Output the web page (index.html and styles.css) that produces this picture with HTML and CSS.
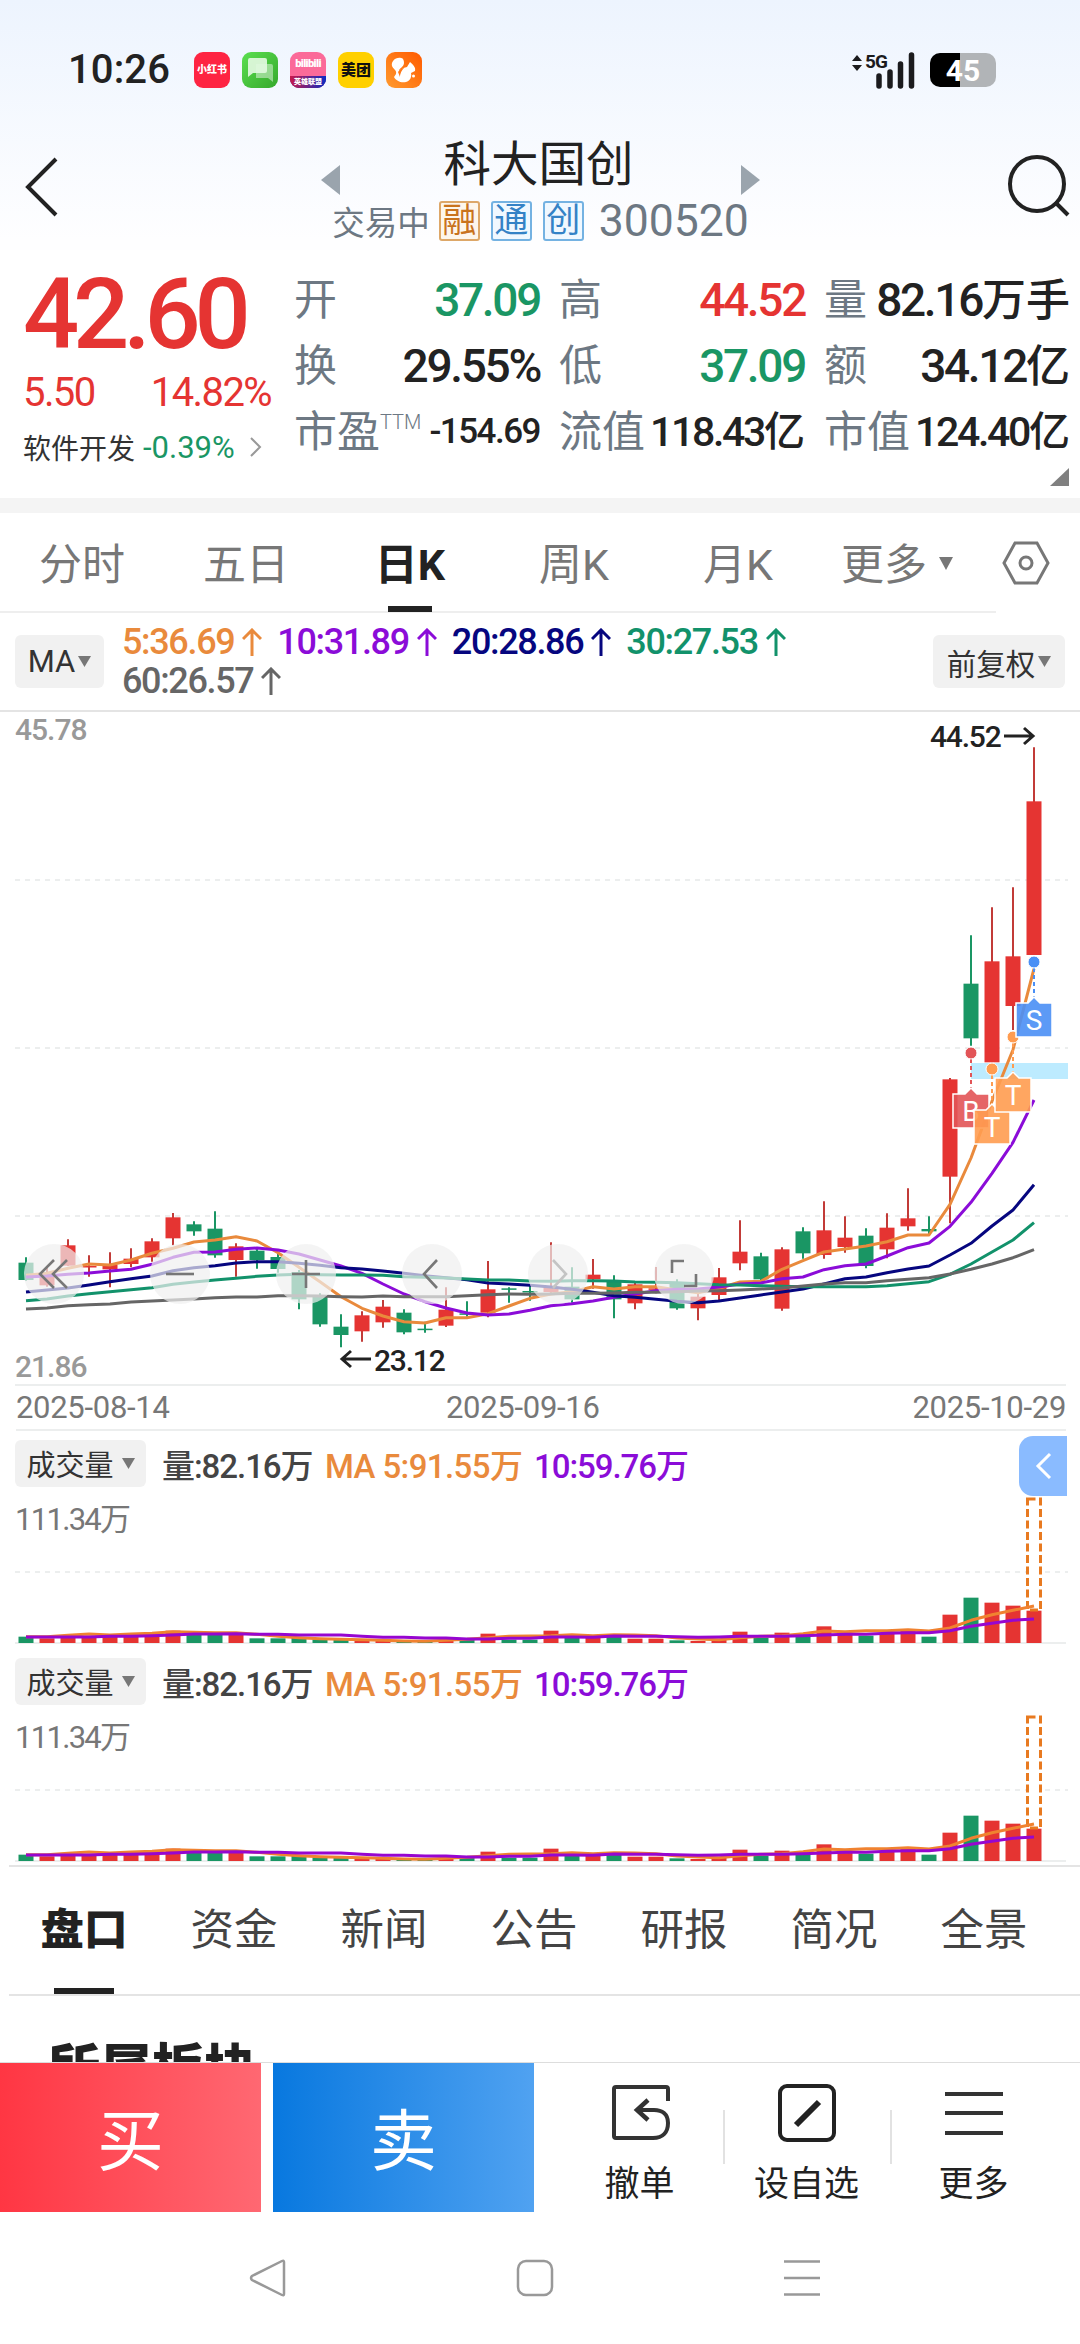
FILE: index.html
```html
<!DOCTYPE html>
<html lang="zh-CN">
<head>
	<meta charset="UTF-8">
	<title>科大国创 300520</title>
	<link rel="stylesheet" href="styles.css">
</head>
<body>
	<div class="top">
		<div class="status">
			<span class="time">10:26</span>
			<div class="apps">
				<span class="app xhs">小红书</span>
				<span class="app msg">
					<svg width="36" height="36" viewBox="0 0 36 36"><path d="M14 12h15q2 0 2 2v16l-5-4H14z" fill="#fff" opacity=".45"/><path d="M8 6h15q2 0 2 2v11q0 2-2 2H11l-5 4V8q0-2 2-2z" fill="#e2f9e0" opacity=".92"/></svg>
				</span>
				<span class="app bili"><b>bilibili</b><i>英雄联盟</i></span>
				<span class="app mt">美团</span>
				<span class="app uc">
					<svg width="36" height="36" viewBox="0 0 36 36" fill="#fff"><path d="M15 6c-6-1-10 4-9 8 1 3 5 4 4 8l-2 3c2 4 7 6 12 5 4-1 6-5 5-9l4-2c1-4-2-6-5-9l-3 5c-4 1-6 2-8 4 0-3 5-4 5-8 0-3-1-5-3-5z"/><path d="M12 20q3-4 6-4-4 4-4 9z" fill="#ff7a1a"/><circle cx="27.500" cy="24" r="1.500"/></svg>
				</span>
			</div>
			<svg class="signal" width="66" height="40" viewBox="0 0 66 40">
				<path d="M1 11l5-6 5 6zM1 15h10l-5 6z" fill="#1b1b1d"/>
				<text x="14" y="18" class="g5">5G</text>
				<path d="M28 26v10M39 22v14M49.500 14v22M60.500 5v31" stroke="#1b1b1d" stroke-width="5.500" stroke-linecap="round"/>
			</svg>
			<div class="battery">45</div>
		</div>
		<div class="head">
			<svg class="back" width="36" height="62" viewBox="0 0 36 62"><path d="M32 3L4 31l28 28" fill="none" stroke="#222" stroke-width="4"/></svg>
			<svg class="tri" width="19" height="30"><path d="M19 0v30L0 15z"/></svg>
			<div class="name">
				<h1>科大国创</h1>
				<div class="sub"><span class="state">交易中</span><em class="rong">融</em><em>通</em><em>创</em><span class="code">300520</span></div>
			</div>
			<svg class="tri" width="19" height="30"><path d="M0 0v30l19-15z"/></svg>
			<svg class="search" width="64" height="64" viewBox="0 0 64 64" fill="none" stroke="#222" stroke-width="4"><circle cx="30" cy="30" r="27"/><path d="M48 48l13 13"/></svg>
		</div>
	</div>

	<div class="quote">
		<div class="price">
			<div class="now">42.60</div>
			<div class="chg"><span>5.50</span><span>14.82%</span></div>
			<div class="sector">软件开发<span>-0.39%</span><svg width="16" height="24"><path d="M3 3l9 9-9 9" fill="none" stroke="#999" stroke-width="2"/></svg></div>
		</div>
		<div class="cells">
			<div><label>开</label><b class="green">37.09</b></div>
			<div><label>高</label><b class="red">44.52</b></div>
			<div><label>量</label><b>82.16<i>万手</i></b></div>
			<div><label>换</label><b>29.55%</b></div>
			<div><label>低</label><b class="green">37.09</b></div>
			<div><label>额</label><b>34.12<i>亿</i></b></div>
			<div><label>市盈<sup>TTM</sup></label><b class="small">-154.69</b></div>
			<div><label>流值</label><b class="mid">118.43<i>亿</i></b></div>
			<div><label>市值</label><b class="mid">124.40<i>亿</i></b></div>
		</div>
		<svg class="corner" width="19" height="18"><path d="M19 0v18H0z" fill="#808080"/></svg>
	</div>

	<div class="period">
		<span>分时</span>
		<span>五日</span>
		<span class="on">日K</span>
		<span>周K</span>
		<span>月K</span>
		<span class="more">更多<svg width="14" height="13"><path d="M0 0h14L7 13z"/></svg></span>
		<svg class="hex" width="48" height="44" viewBox="0 0 48 44" fill="none" stroke="#777" stroke-width="3"><path d="M13 2h22l11 20-11 20H13L2 22z"/><circle cx="24" cy="22" r="6"/></svg>
	</div>

	<div class="mabar">
		<div class="btn ma">MA<svg width="13" height="11"><path d="M0 0h13L6.500 11z"/></svg></div>
		<div class="malist">
			<span class="m5">5:36.69<svg width="20" height="28"><path d="M10 28V2M1 11l9-9 9 9"/></svg></span>
			<span class="m10">10:31.89<svg width="20" height="28"><path d="M10 28V2M1 11l9-9 9 9"/></svg></span>
			<span class="m20">20:28.86<svg width="20" height="28"><path d="M10 28V2M1 11l9-9 9 9"/></svg></span>
			<span class="m30">30:27.53<svg width="20" height="28"><path d="M10 28V2M1 11l9-9 9 9"/></svg></span>
			<span class="m60">60:26.57<svg width="20" height="28"><path d="M10 28V2M1 11l9-9 9 9"/></svg></span>
		</div>
		<div class="btn fq">前复权<svg width="13" height="11"><path d="M0 0h13L6.500 11z"/></svg></div>
	</div>

	<svg id="kline" width="1080" height="674" viewBox="0 0 1080 674"></svg>
	<div class="dates"><span>2025-08-14</span><span>2025-09-16</span><span>2025-10-29</span></div>

	<div class="vol">
		<div class="volbar">
			<div class="btn cjl">成交量<svg width="13" height="11"><path d="M0 0h13L6.500 11z"/></svg></div>
			<span class="v0">量:82.16万</span><span class="v5">MA 5:91.55万</span><span class="v10">10:59.76万</span>
		</div>
		<div class="max">111.34万</div>
		<svg class="volchart" width="1080" height="150" viewBox="0 0 1080 150"></svg>
		<div class="drawer"><svg width="20" height="30"><path d="M17 3L5 15l12 12" fill="none" stroke="#fff" stroke-width="3"/></svg></div>
	</div>
	<div class="vol">
		<div class="volbar">
			<div class="btn cjl">成交量<svg width="13" height="11"><path d="M0 0h13L6.500 11z"/></svg></div>
			<span class="v0">量:82.16万</span><span class="v5">MA 5:91.55万</span><span class="v10">10:59.76万</span>
		</div>
		<div class="max">111.34万</div>
		<svg class="volchart" width="1080" height="150" viewBox="0 0 1080 150"></svg>
	</div>

	<div class="tabs">
		<span class="on">盘口</span><span>资金</span><span>新闻</span><span>公告</span><span>研报</span><span>简况</span><span>全景</span>
	</div>
	<div class="plate"><h2>所属板块</h2></div>

	<div class="trade">
		<div class="buy">买</div>
		<div class="sell">卖</div>
		<div class="tools">
			<div>
				<svg width="60" height="60" viewBox="0 0 60 60" fill="none" stroke="#333" stroke-width="4"><path d="M58 18V6q0-2-2-2H6Q4 4 4 6v47q0 2 2 2h37c10 0 15-6 15-15s-6-13-14-13H27"/><path d="M38 17L27 27l11 10" stroke-width="4.500"/></svg>
				撤单
			</div>
			<div>
				<svg width="60" height="60" viewBox="0 0 60 60" fill="none" stroke="#222" stroke-width="4"><rect x="3" y="3" width="54" height="54" rx="7"/><path d="M19 42l23-23" stroke-width="6"/></svg>
				设自选
			</div>
			<div>
				<svg width="60" height="60" viewBox="0 0 60 60" stroke="#333" stroke-width="4"><path d="M1 11h58M1 30h58M1 50h58"/></svg>
				更多
			</div>
		</div>
	</div>
	<div class="nav">
		<svg width="38" height="38" viewBox="0 0 38 38"><path d="M35 3v32q0 2-2 1L3 21q-2-2 0-4L33 2q2-1 2 1z"/></svg>
		<svg width="38" height="38" viewBox="0 0 38 38"><rect x="2" y="2" width="34" height="34" rx="8"/></svg>
		<svg width="38" height="38" viewBox="0 0 38 38"><path d="M1 2.500h36M1 19h36M1 35.500h36"/></svg>
	</div>
	<script src="chart.js"></script>
</body>
</html>
```
FILE: chart.js
```js
// [涨跌, 最高, 实体上, 实体下, 最低]，单位 1/3 像素
var K=[
	[0,1636,1652,1704,1706],[1,1662,1684,1720,1724],[1,1582,1600,1661,1662],[1,1630,1662,1665,1694],
	[1,1621,1659,1672,1726],[1,1609,1640,1656,1666],[1,1579,1588,1636,1649],[1,1503,1516,1579,1600],
	[0,1528,1537,1558,1571],[0,1498,1550,1630,1637],[1,1594,1603,1644,1694],[0,1609,1616,1644,1670],
	[0,1626,1635,1671,1682],[0,1674,1680,1762,1792],[0,1744,1754,1837,1844],[0,1807,1844,1869,1906],
	[1,1798,1810,1858,1889],[1,1764,1784,1831,1847],[0,1792,1802,1861,1867],[0,1829,1850,1854,1862],
	[1,1726,1793,1841,1845],[0,1768,1804,1807,1814],[1,1647,1732,1802,1816],[0,1726,1729,1733,1772],
	[0,1720,1737,1741,1766],[1,1591,1724,1740,1744],[0,1666,1724,1762,1772],[1,1641,1688,1702,1730],
	[0,1690,1706,1762,1819],[1,1709,1717,1774,1792],[1,1665,1729,1732,1744],[0,1702,1712,1789,1793],
	[1,1744,1754,1789,1825],[1,1668,1696,1749,1766],[1,1525,1619,1654,1675],[0,1622,1633,1702,1708],
	[1,1606,1612,1790,1796],[0,1546,1558,1624,1640],[1,1468,1555,1629,1640],[1,1513,1577,1605,1622],
	[0,1549,1571,1662,1669],[1,1504,1547,1612,1639],[1,1429,1519,1543,1556],[0,1513,1551,1558,1569],
	[1,1098,1102,1394,1534],[0,670,815,979,1001],[1,586,748,1051,1051],[1,526,733,882,954],[1,106,268,729,729]
];
var MA=[
	['#e98a3c',[1690,1684,1669,1656,1659,1644,1624,1609,1590,1584,1574,1587,1622,1666,1709,1754,1789,1812,1829,1833,1817,1817,1805,1782,1759,1746,1739,1724,1731,1724,1724,1734,1742,1729,1710,1708,1672,1646,1620,1611,1602,1589,1569,1569,1477,1338,1168,1013,770]],
	['#8b0cd8',[1695,1692,1687,1683,1677,1672,1657,1636,1621,1620,1612,1608,1614,1626,1644,1662,1684,1716,1746,1769,1788,1803,1809,1806,1795,1781,1775,1767,1756,1746,1736,1732,1731,1725,1716,1713,1700,1695,1673,1661,1656,1632,1607,1593,1543,1471,1384,1291,1164]],
	['#06067f',[1740,1734,1728,1719,1709,1700,1692,1676,1667,1661,1653,1649,1649,1654,1660,1667,1671,1677,1684,1691,1697,1703,1713,1716,1720,1725,1732,1741,1751,1756,1762,1768,1772,1767,1758,1749,1740,1731,1716,1700,1695,1682,1671,1662,1629,1594,1542,1494,1418]],
	['#12926b',[1766,1761,1752,1745,1739,1733,1727,1717,1710,1704,1699,1693,1689,1687,1688,1689,1689,1690,1694,1696,1698,1701,1704,1704,1707,1708,1706,1706,1707,1710,1711,1712,1715,1718,1719,1721,1723,1724,1724,1724,1724,1721,1715,1709,1687,1656,1620,1584,1532]],
	['#666',[1791,1788,1781,1778,1776,1770,1767,1764,1761,1757,1755,1755,1751,1751,1752,1754,1755,1752,1754,1754,1754,1751,1748,1746,1747,1746,1744,1744,1743,1741,1741,1739,1737,1736,1734,1731,1728,1722,1716,1712,1712,1706,1702,1697,1686,1672,1656,1637,1613]]
];
var VOL=[19,14,15,17,18,20,26,37,28,28,28,14,14,18,11,11,10,9,8,8,9,10,28,10,10,37,18,18,22,13,13,8,6,11,34,16,31,18,50,26,22,29,38,19,85,136,121,112,97];
var VMA=[
	['#f08230',[19,19,23,27,24,27,29,34,32,31,31,26,20,16,13,11,10,8,6,5,8,11,16,20,21,22,25,22,25,24,22,15,12,10,16,20,22,28,36,34,37,37,40,36,45,68,85,98,111]],
	['#9606d0',[18,18,18,18,20,20,22,24,27,27,28,26,26,24,24,24,20,17,17,15,15,12,12,14,14,18,18,17,21,20,20,19,17,18,20,20,20,22,24,26,26,29,31,31,37,50,59,68,72]]
];
var RED='#e53432',GREEN='#1a9664';

function x(i){return 26+i*21;}
function line(arr,color,fn){
	var p=[];
	for(var i=0;i<arr.length;i++){
		p.push(x(i)+','+fn(arr[i]).toFixed(1));
	}
	return '<polyline points="'+p.join(' ')+'" fill="none" stroke="'+color+'" stroke-width="3" stroke-linejoin="round"/>';
}
function grid(y){
	return '<path d="M15 '+y+'H1068" stroke="#eceeee" stroke-width="2" stroke-dasharray="5 5"/>';
}
function pin(cx,dotY,top,color,letter){
	return '<path d="M'+cx+' '+(dotY+6)+'V'+(top-4)+'" stroke="'+color+'" stroke-width="2" stroke-dasharray="4 3"/>'+
		'<circle cx="'+cx+'" cy="'+dotY+'" r="6" fill="'+color+'" stroke="#fff"/>'+
		'<path d="M'+(cx-18)+' '+top+'h12l6-6 6 6h12v34h-36z" fill="'+color+'" fill-opacity=".9" stroke="#fff" stroke-width="1.5"/>'+
		'<text class="pin" x="'+cx+'" y="'+(top+27)+'">'+letter+'</text>';
}
// 图上的半透明操作按钮
function ctrl(cx,d,color){
	return '<circle cx="'+cx+'" cy="562" r="30" fill="#f0f0f0" fill-opacity=".7"/>'+
		'<path transform="translate('+cx+' 562)" d="'+d+'" fill="none" stroke="'+color+'" stroke-width="2.6"/>';
}

function drawK(){
	var s=grid(168)+grid(336)+grid(504);
	s+='<path d="M15 673H1066" stroke="#eceeee" stroke-width="2"/>';
	s+='<rect x="971" y="351" width="97" height="16" fill="#bdebff"/>';
	for(var i=0;i<K.length;i++){
		var k=K[i],c=k[0]?RED:GREEN;
		s+='<path d="M'+x(i)+' '+k[1]/3+'V'+k[4]/3+'" stroke="'+(k[0]?'#c23b38':c)+'" stroke-width="2"/>';
		s+='<rect x="'+(x(i)-7.5)+'" y="'+k[2]/3+'" width="15" height="'+Math.max((k[3]-k[2])/3,1.5)+'" fill="'+c+'"/>';
	}
	for(var j=0;j<MA.length;j++){
		s+=line(MA[j][1],MA[j][0],function(v){return v/3;});
	}
	s+=pin(971,341,382,'#e25457','B');
	s+=pin(992,357,398,'#ff9c50','T');
	s+=pin(1013,325,366,'#ff9c50','T');
	s+=pin(1034,250,291,'#4a8ff5','S');
	s+=ctrl(54,'M0-14L-14 0 0 14M13-14L-1 0 13 14','#777');
	s+=ctrl(180,'M-14 0h28','#777');
	s+=ctrl(306,'M-14 0h28M0-14v28','#777');
	s+=ctrl(432,'M5-14L-8 0 5 14','#777');
	s+=ctrl(558,'M-5-14L8 0-5 14','#c4c4c4');
	s+=ctrl(684,'M0-13h-12v12M12 0v12h-12','#777');
	s+='<text class="axis" x="15" y="28">45.78</text><text class="axis" x="15" y="665">21.86</text>';
	s+='<text class="mark" x="930" y="35">44.52</text><path class="arrow" d="M1004 24h29M1024 16l9 8-9 8"/>';
	s+='<text class="mark" x="374" y="659">23.12</text><path class="arrow" d="M371 647h-29M351 639l-9 8 9 8"/>';
	document.getElementById('kline').innerHTML=s;
}
function drawVol(el){
	var base=148,s=grid(77);
	s+='<path d="M15 148H1066" stroke="#eceeee" stroke-width="2"/>';
	for(var i=0;i<VOL.length;i++){
		s+='<rect x="'+(x(i)-7.5)+'" y="'+(base-VOL[i]/3)+'" width="15" height="'+VOL[i]/3+'" fill="'+(K[i][0]?RED:GREEN)+'"/>';
	}
	s+='<rect x="1027.500" y="4" width="13" height="111" fill="#fff" stroke="#e87a20" stroke-width="3" stroke-dasharray="8 3.500"/>';
	for(var j=0;j<VMA.length;j++){
		s+=line(VMA[j][1],VMA[j][0],function(v){return base-v/3;});
	}
	el.innerHTML=s;
}
drawK();
var vols=document.querySelectorAll('.volchart');
for(var n=0;n<vols.length;n++){
	drawVol(vols[n]);
}
```
FILE: styles.css
```css
*{
	margin:0;
	padding:0;
	box-sizing:border-box;
}
html,body{
	width:1080px;
	height:2344px;
	overflow:hidden;
}
body{
	background:#fff;
	color:#222;
	font-family:Roboto,"Noto Sans CJK SC",sans-serif;
}
svg{display:block;flex:none;}
em,i{font-style:normal;}
.red{color:#e53432;}
.green{color:#1a9664;}

.top{
	height:250px;
	background:linear-gradient(#edf4fe,#fefeff 240px);
}
.status{
	display:flex;
	align-items:center;
	height:140px;
	padding:0 84px 0 68px;
}
.time{
	width:126px;
	font-size:40px;
	font-weight:500;
	letter-spacing:.1px;
	line-height:46px;
	margin-top:-1px;
}
.apps{display:flex;gap:12px;margin-right:auto;}
.app{
	width:36px;
	height:36px;
	border-radius:9px;
	overflow:hidden;
	font-size:10px;
	line-height:36px;
	text-align:center;
	font-weight:900;
	color:#fff;
	white-space:nowrap;
}
.xhs{background:#fe2442;}
.msg{background:linear-gradient(135deg,#5bdf50,#35a82c);}
.bili{
	background:linear-gradient(#fb6a99 24px,#3d1479 24px);
	display:flex;
	flex-direction:column;
}
.bili b{font-size:11px;line-height:24px;letter-spacing:-.6px;}
.bili i{
	font-size:7px;
	line-height:12px;
	background:linear-gradient(90deg,#c8194a,#0a2bc4);
}
.mt{background:#ffd000;color:#111;font-size:15px;}
.uc{background:linear-gradient(45deg,#ff9a2e,#ff5a00);}
.signal{margin-right:13px;}
.g5{font-size:19px;font-weight:700;fill:#1b1b1d;letter-spacing:-1px;}
.battery{
	width:66px;
	height:34px;
	border-radius:10px;
	background:linear-gradient(90deg,#000 30px,#b1b4b7 30px);
	color:#fff;
	font-size:30px;
	font-weight:700;
	line-height:35px;
	text-align:center;
}
.head{
	display:flex;
	align-items:center;
	height:110px;
	padding:0 9px 0 24px;
}
.back{margin:-16px 261px 0 0;}
.head .tri{fill:#9aa4ad;margin-top:-30px;}
.name{width:401px;text-align:center;}
.name h1{
	font-size:47.500px;
	font-weight:400;
	line-height:50px;
	margin:-7px 4px 0 0;
}
.sub{
	display:flex;
	justify-content:center;
	align-items:center;
	height:44px;
	margin-top:9px;
	color:#6d7883;
	white-space:nowrap;
}
.sub>*{flex:none;}
.state{font-size:32.500px;margin-right:9px;margin-top:-2px;}
.sub em{
	width:41px;
	height:40px;
	margin-right:11px;
	border:2px solid #74b2e2;
	border-radius:3px;
	background:#f0f8ff;
	color:#3482c6;
	font-size:34px;
	line-height:34px;
}
.sub .rong{border-color:#dda768;background:#fdf6ec;color:#c9731d;}
.code{font-size:44.500px;margin-left:4px;}
.search{margin:-18px 0 0 auto;}

.quote{
	position:relative;
	display:flex;
	height:263px;
	border-bottom:15px solid #f4f4f4;
}
.price{width:271px;padding-left:23px;flex:none;color:#e53432;}
.now{
	font-size:99px;
	font-weight:500;
	line-height:100px;
	letter-spacing:-6.200px;
	margin-top:14px;
}
.chg{
	display:flex;
	justify-content:space-between;
	margin-top:7px;
	font-size:40px;
	line-height:44px;
	letter-spacing:-1.600px;
}
.sector{
	display:flex;
	align-items:center;
	height:34px;
	margin-top:15px;
	color:#333;
	font-size:28px;
	white-space:nowrap;
}
.sector span{margin:0 13px 0 8px;color:#1a9664;font-size:31px;}
.cells{
	display:grid;
	grid-template-columns:repeat(3,246px);
	grid-auto-rows:66px;
	column-gap:19px;
	margin:17px 0 0 23px;
}
.cells div{
	display:flex;
	justify-content:space-between;
	line-height:66px;
	white-space:nowrap;
}
.cells label{font-size:43px;color:#6d7883;}
.cells sup{
	font-size:20px;
	font-weight:300;
	line-height:0;
	vertical-align:18px;
}
.cells b{font-size:46px;font-weight:500;letter-spacing:-2.300px;}
.cells b i{font-size:44px;font-weight:500;letter-spacing:0;}
.cells .mid{font-size:41px;}
.cells .mid i{font-size:41px;}
.cells .small{font-size:35px;letter-spacing:-1.500px;}
.corner{position:absolute;right:11px;bottom:12px;}

.period{
	display:flex;
	align-items:center;
	height:100px;
	font-size:43px;
	color:#777;
	background:linear-gradient(#eee,#eee) 0 98px/996px 2px no-repeat;
}
.period span{
	position:relative;
	width:164px;
	line-height:100px;
	text-align:center;
	margin-top:4px;
}
.period .on{color:#222;font-weight:700;}
.on:after{
	content:"";
	position:absolute;
	left:50%;
	bottom:3px;
	width:44px;
	height:6px;
	margin-left:-22px;
	background:#222;
}
.period .more{
	display:flex;
	align-items:center;
	gap:12px;
	width:182px;
	padding-left:21px;
}
.more svg{fill:#777;margin-top:-4px;}

.mabar{
	display:flex;
	align-items:center;
	height:99px;
	padding:0 15px;
	border-bottom:2px solid #e4e4e4;
}
.btn{
	display:flex;
	align-items:center;
	justify-content:center;
	height:53px;
	flex:none;
	border-radius:6px;
	background:#f1f1f1;
	color:#333;
	font-size:29.500px;
}
.btn svg{fill:#777;margin-left:3px;}
.ma{width:89px;font-size:31px;}
.fq{width:132px;}
.malist{
	display:flex;
	flex-wrap:wrap;
	width:800px;
	margin:0 11px 0 18px;
	font-size:36px;
	font-weight:500;
	line-height:39px;
	letter-spacing:-1.350px;
}
.malist span{display:flex;align-items:center;margin-right:15px;}
.malist svg{margin-left:8px;fill:none;stroke:currentColor;stroke-width:3;}
.m5{color:#e98a3c;}
.m10{color:#8b0cd8;}
.m20{color:#06067f;}
.m30{color:#12926b;}
.m60{color:#666;}

.axis{font-size:30px;fill:#999;letter-spacing:-1px;font-weight:500;}
.mark{font-size:30px;fill:#222;letter-spacing:-1.200px;font-weight:500;}
.arrow{fill:none;stroke:#222;stroke-width:3;}
.pin{font-size:28px;fill:#fff;text-anchor:middle;}
.dates{
	display:grid;
	grid-template-columns:430px 1fr auto;
	height:45px;
	margin:0 14px 0 16px;
	border-bottom:2px solid #eceeee;
	color:#777;
	font-size:31px;
	line-height:44px;
	letter-spacing:-.3px;
}

.vol{position:relative;height:218px;}
.volbar{
	display:flex;
	align-items:center;
	height:64px;
	padding-left:15px;
	font-size:33px;
	font-weight:500;
	letter-spacing:-1.050px;
	white-space:nowrap;
}
.volbar span{margin-top:2px;}
.cjl{
	width:131px;
	height:47px;
	margin-right:16px;
	font-weight:400;
	font-size:29px;
	letter-spacing:0;
}
.cjl svg{margin-left:8px;}
.v0{width:163px;color:#444;}
.v5{width:209px;color:#e98a3c;letter-spacing:-.600px;}
.v10{color:#8b0cd8;}
.max{
	height:0;
	padding-left:15px;
	color:#777;
	font-size:31px;
	line-height:49px;
	letter-spacing:-1.700px;
}
.drawer{
	position:absolute;
	top:5px;
	right:13px;
	width:48px;
	height:60px;
	border-radius:14px 0 0 14px;
	background:#8abbff;
	display:flex;
	align-items:center;
	justify-content:center;
}

.tabs{
	display:flex;
	height:131px;
	margin-top:-2px;
	margin-left:9px;
	border-top:2px solid #e4e4e4;
	border-bottom:2px solid #e4e4e4;
	color:#444;
	font-size:43.500px;
}
.tabs span{
	position:relative;
	width:150px;
	line-height:127px;
	text-align:center;
}
.tabs .on{font-weight:900;color:#222;}
.tabs .on:after{width:60px;margin-left:-30px;bottom:0;}
.plate{
	height:66px;
	padding:37px 0 0 48px;
	overflow:hidden;
}
.plate h2{font-size:52px;line-height:74px;font-weight:900;}
.trade{
	position:relative;
	display:flex;
	gap:12px;
	height:150px;
	border-top:1px solid #ddd;
	background:#fff;
}
.buy,.sell{
	width:261px;
	color:#fff;
	font-size:67px;
	line-height:158px;
	height:149px;
	text-align:center;
}
.buy{background:linear-gradient(90deg,#ff3643,#ff6872);}
.sell{background:linear-gradient(90deg,#0878df,#50a2f1);}
.tools{display:flex;margin-left:10px;}
.tools div{
	position:relative;
	display:flex;
	flex-direction:column;
	align-items:center;
	gap:14px;
	width:167px;
	padding-top:20px;
	font-size:35px;
	line-height:56px;
}
.tools div+div:before{
	content:"";
	position:absolute;
	left:0;
	top:47px;
	width:2px;
	height:54px;
	background:#e2e2e2;
}
.nav{
	display:flex;
	justify-content:center;
	gap:229px;
	padding:47px 11px 0 0;
}
.nav svg{fill:none;stroke:#999;stroke-width:2.500;}
```
